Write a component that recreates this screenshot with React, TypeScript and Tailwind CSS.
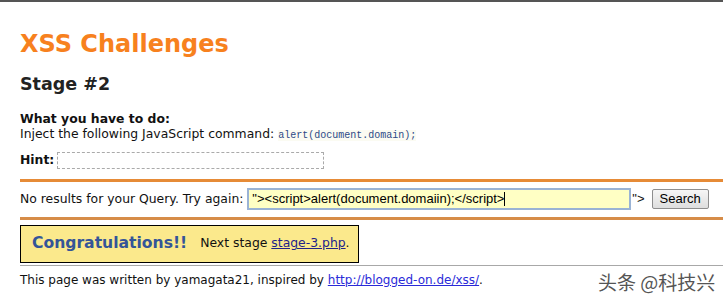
import React from 'react';

const verdana = { fontFamily: '"DejaVu Sans", Verdana, sans-serif' };
const arial = { fontFamily: '"Liberation Sans", Arial, sans-serif' };

export default function App() {
    return (
        <div className="w-[723px] h-[303px] bg-white overflow-hidden relative text-[12.4px] text-[#111]" style={verdana}>
            <div className="h-[2px] bg-[#555]" />
            <div className="pl-[20px]">
                <h1 className="mt-[28px] text-[24px] leading-[28px] font-bold text-[#f7811e]">XSS Challenges</h1>
                <h2 className="mt-[16px] text-[17.5px] leading-[20px] font-bold text-[#222]">Stage #2</h2>
                <div className="mt-[17px] leading-[15px]">
                    <div className="font-bold">What you have to do:</div>
                    <div>
                        Inject the following JavaScript command:{' '}
                        <code className="text-[10px] text-[#2c4a86] bg-[#fbfbf2]" style={{ fontFamily: '"Liberation Mono", monospace' }}>alert(document.domain);</code>
                    </div>
                </div>
                <div className="mt-[8px] flex items-center gap-[3px]">
                    <span className="font-bold">Hint:</span>
                    <div className="w-[267px] h-[17px] border border-dashed border-[#aaa]" />
                </div>
                <div className="mt-[9px] h-[3px] bg-[#e68b37]" />
                <div className="h-[35px] flex items-center">
                    <span>No results for your Query. Try again:&nbsp;</span>
                    <div className="w-[384px] h-[22px] border-2 border-[#9ab3d5] bg-[#ffffc4] flex items-center px-[3px] text-[13px] text-black" style={arial}>
                        "&gt;&lt;script&gt;alert(document.domaiin);&lt;/script&gt;<span className="inline-block w-px h-[14px] bg-black" />
                    </div>
                    <span className="ml-[1px] text-[13px]" style={arial}>"&gt;</span>
                    <button className="ml-[7px] h-[20px] px-[7px] border border-[#8e8e8e] rounded-[2px] bg-gradient-to-b from-[#f6f6f6] to-[#dedede] text-[13px] leading-[18px] text-black" style={arial}>Search</button>
                </div>
                <div className="h-[3px] bg-[#d68c48]" />
                <div className="mt-[5px] w-[339px] h-[38px] border border-black bg-[#fbe98c] flex items-center pl-[11px]">
                    <span className="text-[15.6px] font-bold text-[#345598]">Congratulations!!</span>
                    <span className="ml-[13px]">Next stage <a className="underline text-[#22228a]" href="#">stage-3.php</a>.</span>
                </div>
                <div className="mt-[2px] h-px bg-[#a8a8a8]" />
                <div className="mt-[5px] text-[12px]">
                    This page was written by yamagata21, inspired by{' '}
                    <a className="underline text-[#2a2ad8]" href="#">http://blogged-on.de/xss/</a>.
                </div>
            </div>
            <div className="absolute left-[598px] top-[268px] text-[19px] text-[#555] [text-shadow:0_0_2px_#fff]" style={{ fontFamily: '"Noto Sans CJK SC", sans-serif' }}>
                头条 @科技兴
            </div>
        </div>
    );
}
